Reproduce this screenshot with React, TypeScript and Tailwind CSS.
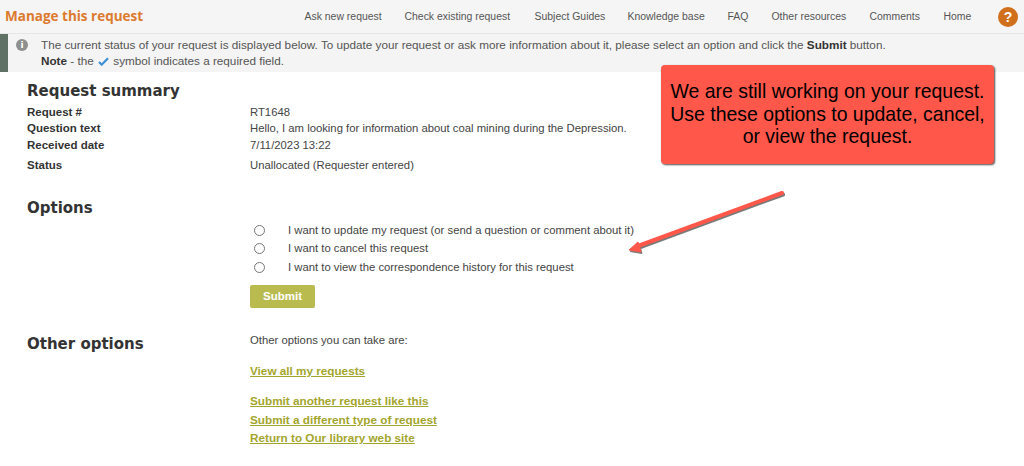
import React from "react";

const nav = [
  ["Ask new request", "w-[76px]"],
  ["Check existing request", "w-[106px]"],
  ["Subject Guides", "w-[69px]"],
  ["Knowledge base", "w-[76px]"],
  ["FAQ", "w-[20px]"],
  ["Other resources", "w-[74px]"],
  ["Comments", "w-[50px]"],
  ["Home", "w-[29px]"],
];

function Row({ label, value, className = "" }: { label: string; value: string; className?: string }) {
  return (
    <div className={`flex h-[16.5px] items-center ${className}`}>
      <div className="w-[223px] text-[11.5px] font-bold text-[#333]">{label}</div>
      <div className="text-[#444]">{value}</div>
    </div>
  );
}

function Radio({ label }: { label: string }) {
  return (
    <div className="flex h-[18.5px] items-center">
      <span className="ml-[4px] h-[11px] w-[11px] rounded-full border-[1.5px] border-[#767676] bg-white" />
      <span className="ml-[23px] text-[#444]">{label}</span>
    </div>
  );
}

export default function App() {
  return (
    <div className="relative h-[466px] w-[1024px] overflow-hidden bg-white font-['Liberation_Sans',Arial,sans-serif] text-[11.3px] leading-none">
      <header className="flex h-[34px] items-center border-b border-[#e6e6e6] bg-[#f5f5f5] pl-[5px] pr-[6px] pt-[1px]">
        <div className="font-['Open_Sans',sans-serif] text-[13.5px] font-bold text-[#dc7a2e]">Manage this request</div>
        <nav className="ml-auto flex items-center gap-[24px] text-[#555]">
          {nav.map(([t, w]) => (
            <span key={t} className={`${w} whitespace-nowrap text-[10.45px]`}>{t}</span>
          ))}
          <span className="ml-[1.5px] flex h-[20px] w-[20px] items-center justify-center rounded-full bg-[#d0701c] text-[14px] font-bold text-white">?</span>
        </nav>
      </header>

      <section className="flex h-[38px] bg-[#f4f4f4] text-[#555]">
        <div className="w-[8px] bg-[#5f7064]" />
        <div className="ml-[8px] mt-[5px] flex h-[12px] w-[12px] items-center justify-center rounded-full bg-[#8f8f8f] font-['DejaVu_Sans',sans-serif] text-[9px] font-bold text-white">i</div>
        <div className="ml-[13px] pt-[3px] text-[11.72px] leading-[16px]">
          <p>The current status of your request is displayed below. To update your request or ask more information about it, please select an option and click the <b className="text-[#333]">Submit</b> button.</p>
          <p className="flex items-center">
            <b className="text-[#333]">Note</b>&nbsp;- the&nbsp;
            <svg viewBox="0 0 12 10" className="mx-[1px] h-[9px] w-[11px]"><path d="M1 5.5 4 8.5 11 1.5" fill="none" stroke="#3b8fd6" strokeWidth="2.4" /></svg>
            &nbsp;symbol indicates a required field.
          </p>
        </div>
      </section>

      <main className="pl-[27px]">
        <h2 className="pt-[10px] font-['DejaVu_Sans',sans-serif] text-[15px] font-bold leading-[18px] text-[#333]">Request summary</h2>
        <div className="mt-[4px]">
          <Row label="Request #" value="RT1648" />
          <Row label="Question text" value="Hello, I am looking for information about coal mining during the Depression." />
          <Row label="Received date" value="7/11/2023 13:22" />
          <Row label="Status" value="Unallocated (Requester entered)" className="mt-[4px]" />
        </div>

        <h2 className="mt-[25px] font-['DejaVu_Sans',sans-serif] text-[15px] font-bold leading-[18px] text-[#333]">Options</h2>
        <div className="ml-[223px] mt-[4px]">
          <Radio label="I want to update my request (or send a question or comment about it)" />
          <Radio label="I want to cancel this request" />
          <Radio label="I want to view the correspondence history for this request" />
          <button className="mt-[8px] flex h-[23px] w-[65px] items-center justify-center rounded-[2px] bg-[#b9bb4e] pt-[1px] text-[11.5px] font-bold text-white">Submit</button>
        </div>

        <div className="mt-[27px] flex">
          <h2 className="w-[223px] font-['DejaVu_Sans',sans-serif] text-[15px] font-bold leading-[18px] text-[#333]">Other options</h2>
          <div className="flex flex-col items-start text-[11.72px]">
            <p className="text-[11.3px] text-[#444]">Other options you can take are:</p>
            <a className="mt-[19px] font-bold text-[#a3a52c] underline">View all my requests</a>
            <a className="mt-[18px] font-bold text-[#a3a52c] underline">Submit another request like this</a>
            <a className="mt-[8px] font-bold text-[#a3a52c] underline">Submit a different type of request</a>
            <a className="mt-[6px] font-bold text-[#a3a52c] underline">Return to Our library web site</a>
          </div>
        </div>
      </main>

      <div className="absolute left-[661px] top-[65px] flex h-[99px] w-[333px] items-center justify-center rounded-[4px] bg-[#ff574a] text-center text-[19.45px] leading-[22.5px] text-black shadow-[1px_1px_2px_rgba(0,0,0,0.7)]">
        <p className="-mt-[1px]">We are still working on your request.<br />Use these options to update, cancel,<br />or view the request.</p>
      </div>

      <svg className="absolute left-[620px] top-[180px]" width="175" height="80" viewBox="0 0 175 80">
        <g transform="translate(1 1.5)" opacity="0.6" fill="#222" stroke="#222">
          <path d="M162 13 18 66" strokeWidth="4" strokeLinecap="round" />
          <path d="M9 70 18 62 21 72Z" strokeWidth="1" />
        </g>
        <path d="M162 13 18 66" stroke="#ff574a" strokeWidth="4" strokeLinecap="round" />
        <path d="M9 70 18 62 21 72Z" fill="#ff574a" stroke="#ff574a" strokeLinejoin="round" />
      </svg>
    </div>
  );
}
